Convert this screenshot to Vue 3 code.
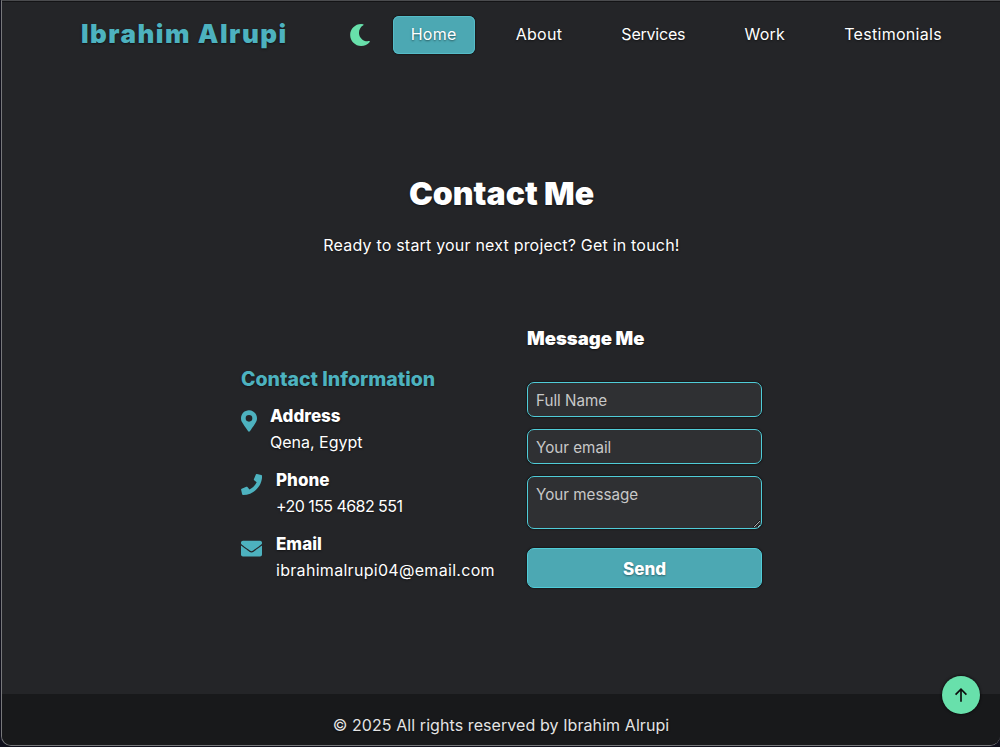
<template>
  <div class="frame">
    <header class="navbar">
      <div class="logo">Ibrahim Alrupi</div>
      <nav class="nav-links">
        <svg class="moon" viewBox="0 0 512 512"><path d="M283 512c79 0 151-36 199-95 7-9-1-21-12-19-124 24-238-72-238-197 0-72 39-139 101-174 10-6 8-20-3-22A258 258 0 0 0 283 0C142 0 27 115 27 256s115 256 256 256z" /></svg>
        <a v-for="link in links" :key="link" class="nav-link" :class="[link.toLowerCase(), { active: link === 'Home' }]">{{ link }}</a>
      </nav>
    </header>

    <main class="contact">
      <h1 class="title">Contact Me</h1>
      <p class="subtitle">Ready to start your next project? Get in touch!</p>

      <div class="columns">
        <section class="info">
          <h3 class="info-title">Contact Information</h3>
          <div class="info-item">
            <svg class="icon pin" viewBox="0 0 384 512"><path d="M172 502C27 291 0 269 0 192 0 86 86 0 192 0s192 86 192 192c0 77-27 99-172 310-10 14-30 14-40 0zm20-230a80 80 0 1 0 0-160 80 80 0 0 0 0 160z" /></svg>
            <div>
              <h4 class="item-title">Address</h4>
              <p class="item-text">Qena, Egypt</p>
            </div>
          </div>
          <div class="info-item">
            <svg class="icon" viewBox="0 0 512 512"><path d="M493 24 389 0c-11-3-23 3-27 14l-48 112c-4 10-1 21 7 28l61 50c-36 76-98 139-175 175l-50-61c-7-8-18-11-28-7L17 359c-11 5-17 16-14 28l24 104c3 11 12 19 24 19 256 0 464-207 464-464 0-11-8-21-22-22z" /></svg>
            <div>
              <h4 class="item-title">Phone</h4>
              <p class="item-text phone-number">+20 155 4682 551</p>
            </div>
          </div>
          <div class="info-item">
            <svg class="icon" viewBox="0 0 512 512"><path d="M502 191c4-3 10 0 10 5v204c0 27-21 48-48 48H48c-27 0-48-21-48-48V196c0-5 6-8 10-5 22 17 52 39 154 113 21 15 57 48 92 48s72-33 92-48c102-74 132-96 154-113zM256 320c23 0 57-29 73-41 133-97 143-105 174-129 6-5 9-12 9-19v-19c0-27-21-48-48-48H48C21 64 0 85 0 112v19c0 7 3 14 9 19 31 24 41 32 174 129 16 12 50 41 73 41z" /></svg>
            <div>
              <h4 class="item-title">Email</h4>
              <p class="item-text email-address">ibrahimalrupi04@email.com</p>
            </div>
          </div>
        </section>

        <form class="message" @submit.prevent>
          <h3 class="message-title">Message Me</h3>
          <input class="field" type="text" placeholder="Full Name" />
          <input class="field" type="email" placeholder="Your email" />
          <textarea class="field area" placeholder="Your message"></textarea>
          <button class="send">Send</button>
        </form>
      </div>
    </main>

    <footer class="footer">© 2025 All rights reserved by Ibrahim Alrupi</footer>

    <button class="to-top" aria-label="Back to top">
      <svg viewBox="0 0 24 24"><path d="M12 20V5M5.500 11.500 12 5l6.500 6.500" /></svg>
    </button>
  </div>
</template>

<script setup>
const links = ['Home', 'About', 'Services', 'Work', 'Testimonials']
</script>

<style>
html, body {
  background: #10101c;
}
</style>

<style scoped>
.frame {
  position: relative;
  box-sizing: border-box;
  width: 999px;
  height: 746px;
  margin-left: 1px;
  display: flex;
  flex-direction: column;
  overflow: hidden;
  background: #242528;
  border: 1px solid #77787b;
  border-top-color: #4a4b4e;
  border-right: none;
  border-radius: 0 0 10px 10px;
  font-family: Inter, "Open Sans", sans-serif;
  color: #fff;
  text-shadow: 0 1px 2px rgba(0, 0, 0, 0.5);
}

.navbar {
  box-sizing: border-box;
  display: flex;
  align-items: center;
  justify-content: space-between;
  height: 68px;
  padding: 0 40px 1px 79px;
  border-top: 1px solid #141416;
  flex-shrink: 0;
}

.logo {
  margin-bottom: 3px;
  font-size: 26px;
  font-weight: 900;
  letter-spacing: 1.5px;
  color: #4db2bf;
}

.nav-links {
  display: flex;
  align-items: center;
  gap: 23px;
}

.moon {
  width: 22px;
  height: 22px;
  margin-right: -1px;
  fill: #68e0ab;
}

.nav-link {
  padding: 9px 18px 11px;
  border-radius: 6px;
  font-size: 16px;
  font-weight: 400;
  letter-spacing: 0.3px;
  line-height: 18px;
}

/* Inter runs wider than the original face on this word */
.nav-link.services {
  letter-spacing: -0.2px;
}

.nav-link.active {
  background: #4ca8b3;
  box-shadow: inset 0 0 0 1px #55bcc8, 0 0 2px #000;
}

.contact {
  flex: 1;
  display: flex;
  flex-direction: column;
  align-items: center;
  padding-top: 106px;
  padding-left: 1px;
}

.title {
  margin: 0;
  font-size: 32px;
  line-height: 38px;
  font-weight: 900;
}

.subtitle {
  margin: 20px 0 0;
  font-size: 16px;
  letter-spacing: 0.2px;
  line-height: 24px;
}

.columns {
  display: flex;
  align-items: flex-start;
  gap: 31px;
  margin-top: 69px;
}

.info {
  width: 255px;
  margin-top: 40px;
}

.info-title {
  margin: 0 0 11px;
  font-size: 19.500px;
  font-weight: 800;
  line-height: 26px;
  color: #4db2bf;
}

.info-item {
  display: flex;
  align-items: flex-start;
  gap: 13px;
  margin-bottom: 12px;
}

.icon {
  width: 21px;
  height: 21px;
  margin: 7px 1px 0 0;
  fill: #4db2bf;
  flex-shrink: 0;
}

.icon.pin {
  width: 16px;
  height: 22px;
  margin-right: 0;
}

.item-title {
  margin: 0;
  font-size: 17px;
  line-height: 26px;
  font-weight: 800;
}

.item-text {
  margin: 0;
  font-size: 16px;
  line-height: 26px;
}

.phone-number {
  letter-spacing: -0.55px;
}

.email-address {
  letter-spacing: 0.3px;
}

.message {
  width: 235px;
  display: flex;
  flex-direction: column;
  gap: 12px;
}

.message-title {
  margin: 0 0 20px;
  font-size: 18.500px;
  font-weight: 900;
  line-height: 24px;
}

.field {
  box-sizing: border-box;
  width: 100%;
  height: 35px;
  padding: 2px 8px 0;
  background: #2f3033;
  border: 1px solid #50ccd8;
  border-radius: 7px;
  box-shadow: 0 0 2px #000;
  color: #fff;
  font-family: Inter, sans-serif;
  font-size: 15.200px;
}

.field::placeholder {
  color: #c8c8c8;
}

.area {
  height: 53px;
  padding: 8px;
  resize: vertical;
  display: block;
}

.send {
  height: 40px;
  margin-top: 7px;
  padding-top: 2px;
  background: #4ca8b3;
  border: 1px solid #50ccd8;
  border-radius: 7px;
  box-shadow: 0 0 2px #000;
  color: #fff;
  font-family: Inter, sans-serif;
  font-size: 17px;
  font-weight: 800;
  text-shadow: 0 1px 2px rgba(0, 0, 0, 0.4);
}

.footer {
  height: 51px;
  flex-shrink: 0;
  display: flex;
  align-items: center;
  justify-content: center;
  padding-top: 11px;
  box-sizing: border-box;
  background: #18191b;
  font-size: 16px;
  letter-spacing: 0.08px;
  color: #e4e4e4;
}

.to-top {
  position: absolute;
  right: 20px;
  bottom: 31px;
  width: 38px;
  height: 38px;
  padding: 0;
  display: flex;
  align-items: center;
  justify-content: center;
  background: #68e0ab;
  border: none;
  border-radius: 50%;
  box-shadow: 0 0 3px #000;
}

.to-top svg {
  width: 20px;
  height: 20px;
  fill: none;
  stroke: #0d0d0d;
  stroke-width: 2;
}
</style>
